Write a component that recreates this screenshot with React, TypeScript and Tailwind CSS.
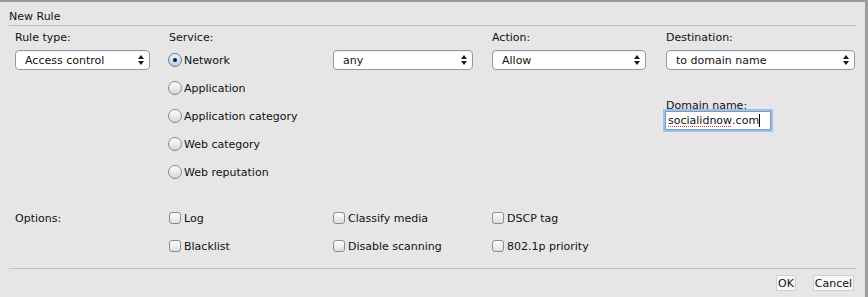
import React from 'react';

function Select({ value, width }: { value: string; width: string }) {
  return (
    <div
      className={`${width} h-[20px] flex items-center justify-between pl-[9px] pr-[5px] bg-white border border-[#8e9bad] rounded-[4px] shadow-[inset_0_1px_1px_rgba(0,0,0,0.08)]`}
    >
      <span className="leading-[13px]">{value}</span>
      <svg width="6" height="10" viewBox="0 0 6 10" className="shrink-0">
        <path d="M0 4 L3 0 L6 4 Z" fill="#1a1a1a" />
        <path d="M0 6 L3 10 L6 6 Z" fill="#1a1a1a" />
      </svg>
    </div>
  );
}

function Radio({ label, checked }: { label: string; checked?: boolean }) {
  return (
    <div className="h-[20px] flex items-center -ml-[1px]">
      <span
        className={`w-[14px] h-[14px] rounded-full border flex items-center justify-center ${
          checked
            ? 'border-[#5f7fa6] bg-gradient-to-b from-[#eef4fc] to-[#b8cde6]'
            : 'border-[#8a8a8a] bg-gradient-to-b from-white to-[#d6d6d6]'
        }`}
      >
        {checked && <span className="w-[4px] h-[4px] rounded-full bg-[#1a1a1a]" />}
      </span>
      <span className="ml-[2px] leading-[13px]">{label}</span>
    </div>
  );
}

function Checkbox({ label }: { label: string }) {
  return (
    <div className="h-[20px] flex items-center">
      <span className="w-[12px] h-[12px] rounded-[3px] border border-[#8c8c8c] bg-gradient-to-b from-white to-[#dedede]" />
      <span className="ml-[3px] leading-[13px]">{label}</span>
    </div>
  );
}

export default function App() {
  return (
    <div className="w-[868px] h-[297px] overflow-hidden bg-[#e6e6e6] border-t-2 border-r-[3px] border-[#9c9c9c] text-[11px] text-[#111] font-['DejaVu_Sans',sans-serif]">
      <div className="mx-[9px] h-[24px] border-b border-[#b9c1cc] pt-[8px] leading-[13px]">New Rule</div>

      {/* main fields */}
      <div className="pl-[15px] pt-[5px] grid grid-cols-[154px_164px_159px_174px_189px] items-start">
        <div>
          <div className="h-[13px] leading-[13px]">Rule type:</div>
          <div className="mt-[6px]">
            <Select value="Access control" width="w-[135px]" />
          </div>
        </div>
        <div>
          <div className="h-[13px] leading-[13px]">Service:</div>
          <div className="mt-[6px] flex flex-col gap-[8px]">
            <Radio label="Network" checked />
            <Radio label="Application" />
            <Radio label="Application category" />
            <Radio label="Web category" />
            <Radio label="Web reputation" />
          </div>
        </div>
        <div>
          <div className="h-[13px]" />
          <div className="mt-[6px]">
            <Select value="any" width="w-[140px]" />
          </div>
        </div>
        <div>
          <div className="h-[13px] leading-[13px]">Action:</div>
          <div className="mt-[6px]">
            <Select value="Allow" width="w-[154px]" />
          </div>
        </div>
        <div>
          <div className="h-[13px] leading-[13px]">Destination:</div>
          <div className="mt-[6px]">
            <Select value="to domain name" width="w-[189px]" />
          </div>
          <div className="mt-[31px] h-[10px] leading-[10px]">Domain name:</div>
          <div className="-ml-[1px] w-[106px] h-[19px] flex items-center pl-[2px] bg-white border border-[#7b9bc2] shadow-[0_0_0_2px_#9ec0ea]">
            <span className="leading-[13px] underline decoration-dotted decoration-[#e0342c] underline-offset-2">socialidnow</span>
            <span className="leading-[13px]">.com</span>
            <span className="w-[1px] h-[13px] bg-black" />
          </div>
        </div>
      </div>

      {/* options */}
      <div className="mt-[26px] pl-[15px] grid grid-cols-[154px_164px_159px_174px] items-start">
        <div className="h-[20px] flex items-center leading-[13px]">Options:</div>
        <div className="flex flex-col gap-[8px]">
          <Checkbox label="Log" />
          <Checkbox label="Blacklist" />
        </div>
        <div className="flex flex-col gap-[8px]">
          <Checkbox label="Classify media" />
          <Checkbox label="Disable scanning" />
        </div>
        <div className="flex flex-col gap-[8px]">
          <Checkbox label="DSCP tag" />
          <Checkbox label="802.1p priority" />
        </div>
      </div>

      <div className="mx-[9px] mt-[12px] border-t border-[#b9c1cc]" />

      <div className="mt-[6px] pr-[11px] flex justify-end gap-[17px]">
        <button className="h-[16px] w-[20px] flex items-center justify-center bg-[#f7f7f7] border border-[#cfcfcf] leading-[13px]">
          OK
        </button>
        <button className="h-[16px] w-[41px] flex items-center justify-center bg-[#f7f7f7] border border-[#cfcfcf] leading-[13px]">
          Cancel
        </button>
      </div>
    </div>
  );
}
